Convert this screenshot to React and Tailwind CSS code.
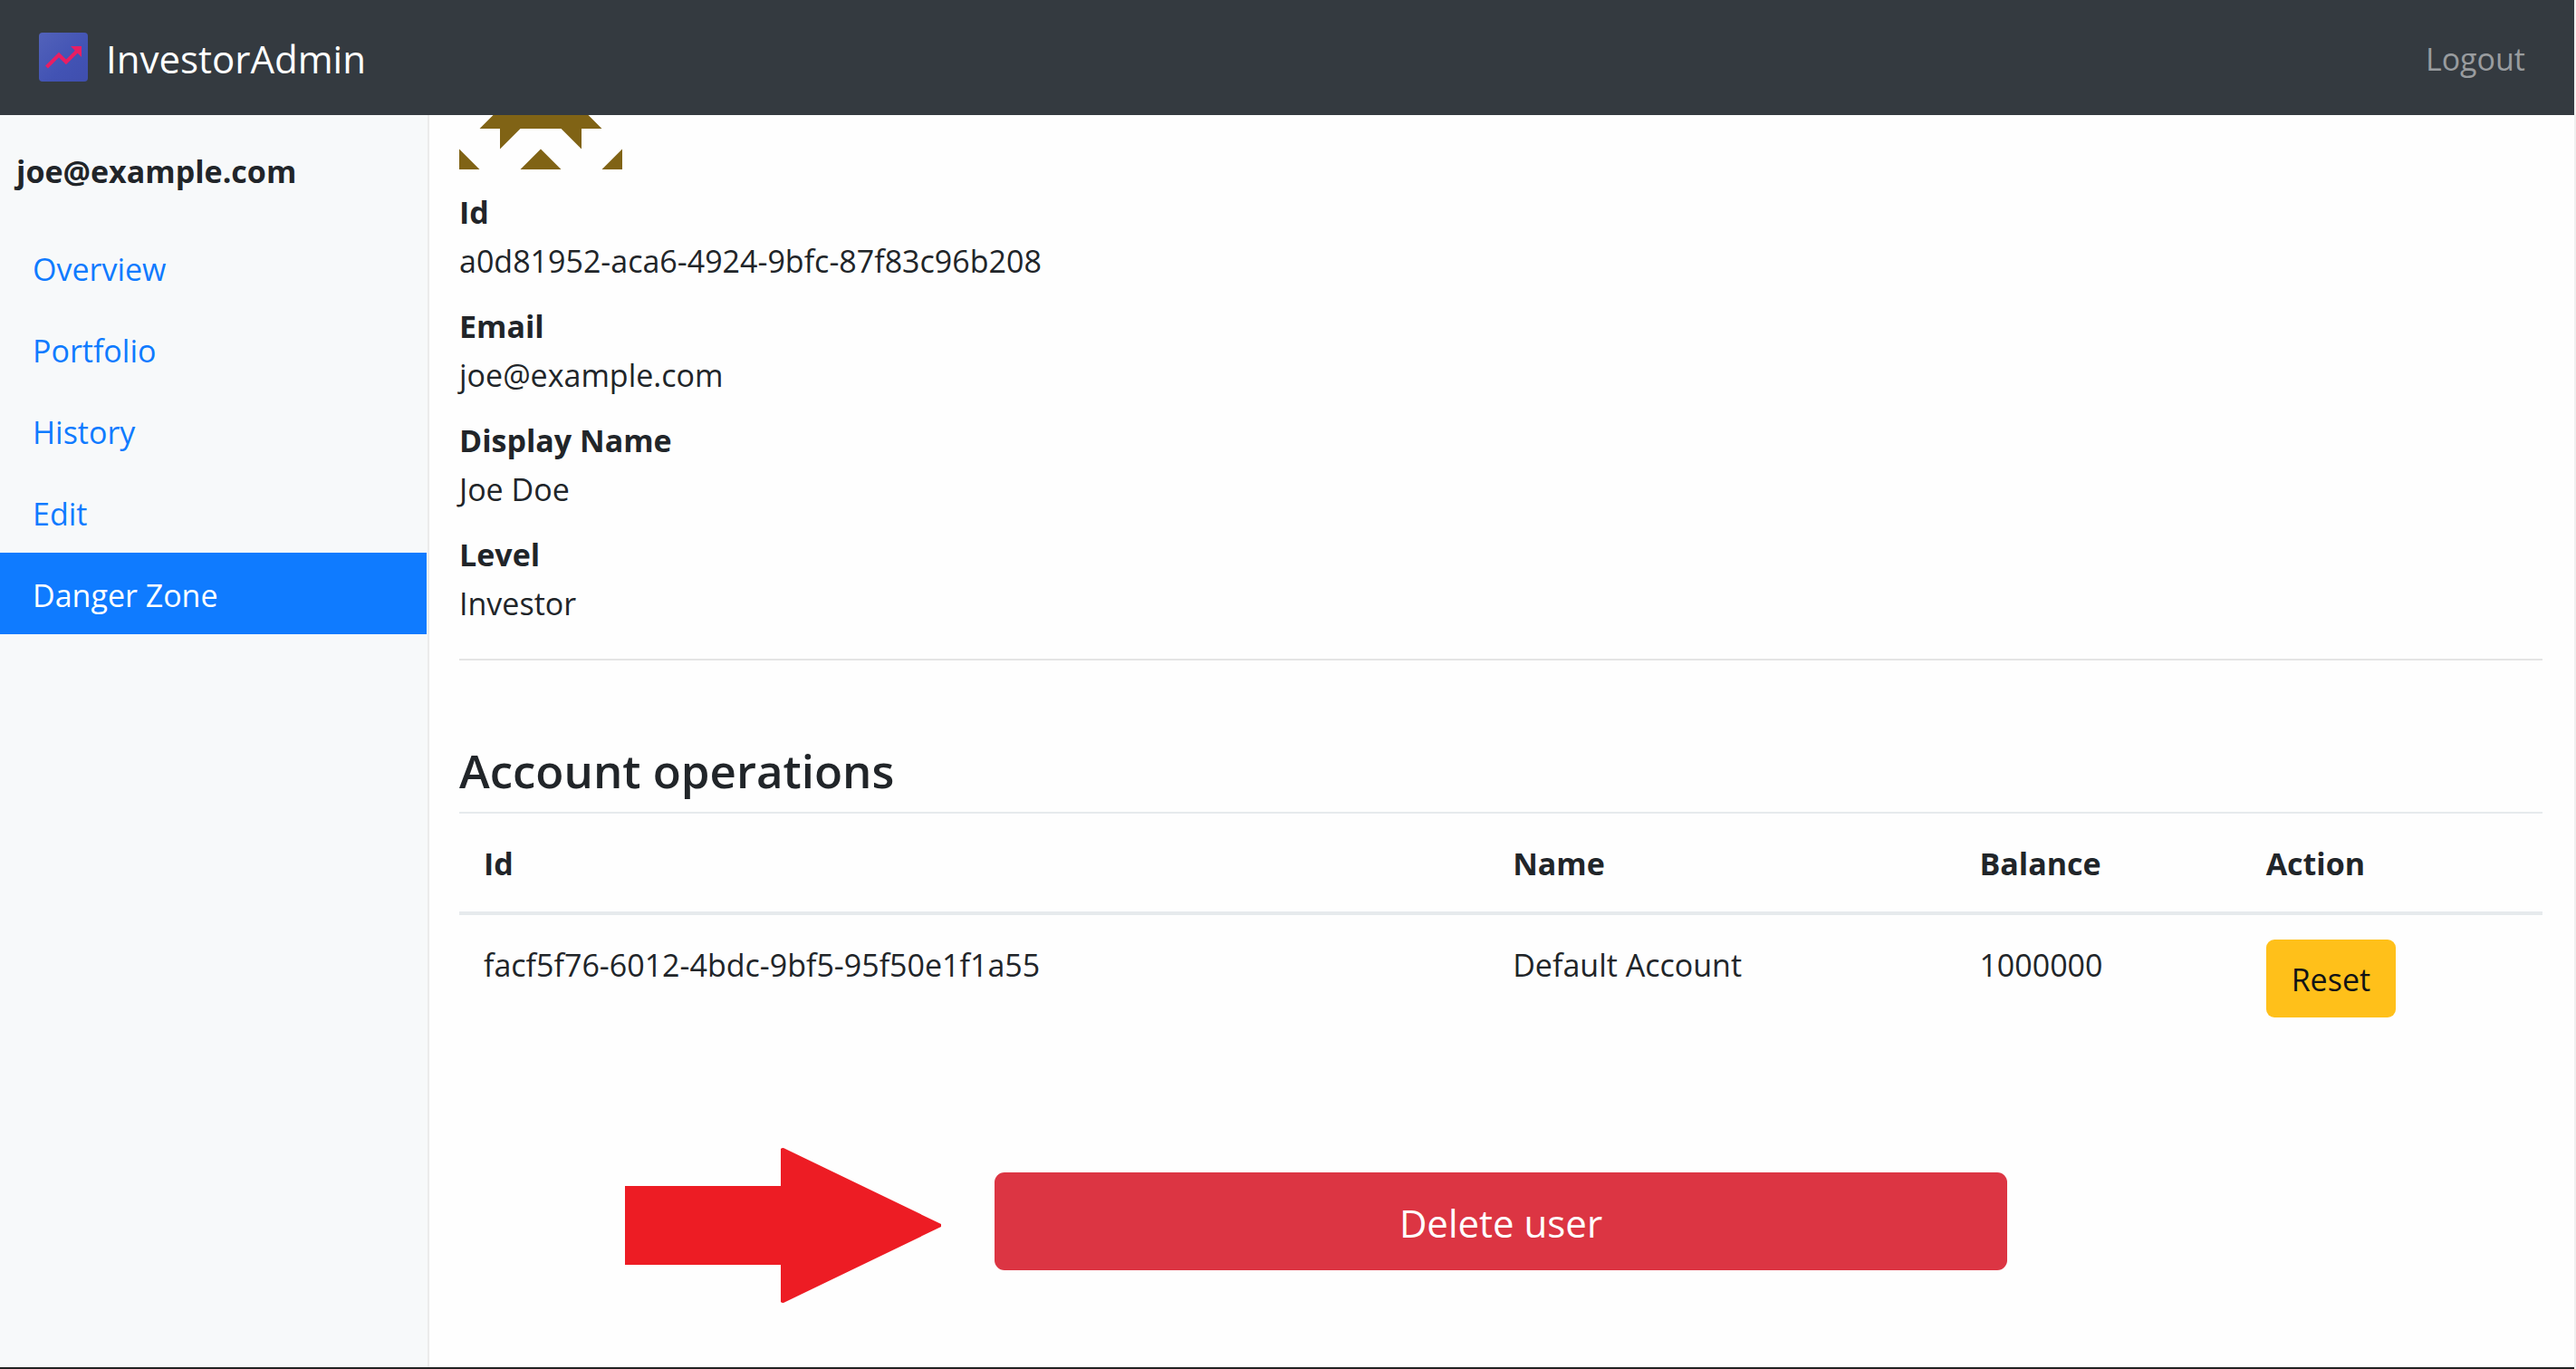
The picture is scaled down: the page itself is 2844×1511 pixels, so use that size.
const navItems = ['Overview', 'Portfolio', 'History', 'Edit', 'Danger Zone'];

const details = [
  ['Id', 'a0d81952-aca6-4924-9bfc-87f83c96b208'],
  ['Email', 'joe@example.com'],
  ['Display Name', 'Joe Doe'],
  ['Level', 'Investor'],
];

const accounts = [
  { id: 'facf5f76-6012-4bdc-9bf5-95f50e1f1a55', name: 'Default Account', balance: '1000000' },
];

function Logo() {
  return (
    <svg viewBox="0 0 54 54" className="size-[54px] shrink-0" aria-hidden="true">
      <defs>
        <linearGradient id="logo-fill" x1="0" y1="0" x2="1" y2="1">
          <stop offset="0" stopColor="#5262ba" />
          <stop offset="0.6" stopColor="#4253b4" />
          <stop offset="1" stopColor="#3f4eae" />
        </linearGradient>
      </defs>
      <rect width="54" height="54" rx="4" fill="url(#logo-fill)" />
      <path d="M8.500 38 L22 24.500 L30 32.500 L43 19.500" fill="none" stroke="#e91e63" strokeWidth="4" />
      <path d="M35 15 H47 V27 Z" fill="#e91e63" />
    </svg>
  );
}

function Avatar() {
  return (
    <svg viewBox="0 120 180 60" className="h-[60px] w-[180px]" role="img" aria-label="User avatar">
      <g fill="#806315">
        <path d="M37.500 120 H142.500 L157.500 135 H135 V157.500 L112.500 135 H67.500 L45 157.500 V135 H22.500 Z" />
        <path d="M0 157.500 L22.500 180 H0 Z" />
        <path d="M90 157.500 L112.500 180 H67.500 Z" />
        <path d="M180 157.500 V180 H157.500 Z" />
      </g>
    </svg>
  );
}

function Header() {
  return (
    <header className="flex h-[127px] items-center justify-between bg-[#343a40] pr-[54px] pb-px pl-[43px]">
      <a href="#home" className="flex items-center gap-5 text-[42px] leading-[66px] text-white">
        <Logo />
        <span className="pt-1">InvestorAdmin</span>
      </a>
      <a href="#logout" className="pt-1 text-[#999c9f]">Logout</a>
    </header>
  );
}

function Sidebar() {
  return (
    <aside className="w-[474px] shrink-0 border-r-2 border-[#ebebeb] bg-[#f7f9fa] pt-[35px]">
      <p className="mb-[34px] px-[18px] font-bold">joe@example.com</p>
      <nav>
        {navItems.map((item) => (
          <a
            key={item}
            href={'#' + item.toLowerCase().replace(' ', '-')}
            aria-current={item === 'Danger Zone' ? 'page' : undefined}
            className="mr-px block px-9 pt-5 pb-4 text-[#0f7bff] aria-[current=page]:bg-[#0f7bff] aria-[current=page]:text-white"
          >
            {item}
          </a>
        ))}
      </nav>
    </aside>
  );
}

function AccountTable() {
  return (
    <table className="w-full table-fixed border-separate border-spacing-0 text-left">
      <colgroup>
        <col className="w-[49.4%]" />
        <col className="w-[22.4%]" />
        <col className="w-[13.75%]" />
        <col className="w-[14.45%]" />
      </colgroup>
      <thead>
        <tr>
          {['Id', 'Name', 'Balance', 'Action'].map((h) => (
            <th key={h} scope="col" className="border-t-2 border-b-4 border-[#e6eaed] px-[27px] pt-7 pb-[26px] font-bold">{h}</th>
          ))}
        </tr>
      </thead>
      <tbody>
        {accounts.map((a) => (
          <tr key={a.id} className="align-top">
            <td className="px-[27px] py-7">{a.id}</td>
            <td className="px-[27px] py-7">{a.name}</td>
            <td className="px-[27px] py-7">{a.balance}</td>
            <td className="px-[27px] pt-[27px] pb-7">
              <button type="button" className="block rounded-[9px] bg-[#ffc01a] px-7 pt-[17px] pb-[15px] text-[#111315]">
                Reset
              </button>
            </td>
          </tr>
        ))}
      </tbody>
    </table>
  );
}

export default function App() {
  return (
    <div className="flex min-h-screen flex-col border-r-2 border-[#f0f0f0] bg-[#fefefe] font-['Open_Sans',sans-serif] text-[34px] leading-[54px] text-[#212529]">
      <Header />
      <div className="flex grow">
        <Sidebar />
        <main className="min-w-0 grow pr-[35px] pl-[33px]">
          <Avatar />
          <dl className="mt-5 flex flex-col gap-[18px]">
            {details.map(([label, value]) => (
              <div key={label}>
                <dt className="font-bold">{label}</dt>
                <dd>{value}</dd>
              </div>
            ))}
          </dl>
          <hr className="mt-[34px] border-t-2 border-[#e4e4e4]" />
          <h2 className="mt-[88px] mb-[13px] text-[51px] leading-[66px] font-semibold">Account operations</h2>
          <AccountTable />
          <div className="relative mx-auto mt-[143px] w-[48.6%]">
            <svg
              viewBox="0 0 350 171"
              className="absolute -top-[27px] right-full mr-[58px] h-[171px] w-[350px]"
              aria-hidden="true"
            >
              <path
                d="M0 42 H172 V1 Q174 -1 177 1 L349 84 V87 L177 170 Q174 172 172 170 V129 H0 Z"
                fill="#ed1c24"
              />
            </svg>
            <button type="button" className="w-full rounded-[11px] bg-[#dc3543] pt-[23px] pb-[19px] text-[42px] leading-[66px] text-white">
              Delete user
            </button>
          </div>
        </main>
      </div>
      <footer className="h-0.5 bg-[#222222]" />
    </div>
  );
}
